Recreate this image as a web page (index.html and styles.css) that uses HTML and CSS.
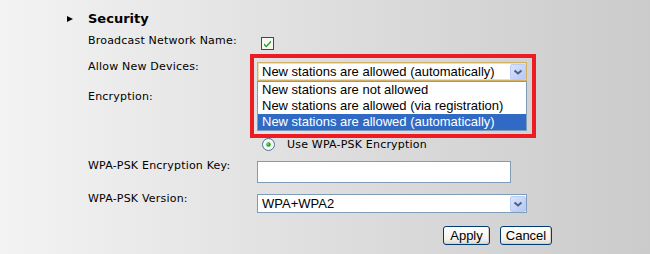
FILE: index.html
```html
<!DOCTYPE html>
<html>
<head>
    <meta charset="UTF-8">
    <title>Security</title>
    <link rel="stylesheet" href="styles.css">
</head>
<body>
    <div class="section">
        <h2 class="heading"><span class="bullet"></span>Security</h2>

        <div class="row">
            <div class="label">Broadcast Network Name:</div>
            <div class="control check-wrap">
                <svg class="checkbox" width="13" height="13" viewBox="0 0 13 13">
                    <rect x="0.5" y="0.5" width="12" height="12" fill="#f6f6f3" stroke="#1c5180"/>
                    <path d="M3 6.2 L5.2 8.4 L10 3.6 L10 5.6 L5.2 10.4 L3 8.2 Z" fill="#21a121"/>
                </svg>
            </div>
        </div>

        <div class="row">
            <div class="label">Allow New Devices:</div>
            <div class="control">
                <div class="select focused">
                    <span class="select-text">New stations are allowed (automatically)</span>
                    <svg class="arrow" width="16" height="16" viewBox="0 0 16 16">
                        <defs>
                            <linearGradient id="ab" x1="0" y1="0" x2="1" y2="1">
                                <stop offset="0" stop-color="#dbe5fd"/>
                                <stop offset="1" stop-color="#b3c6f4"/>
                            </linearGradient>
                        </defs>
                        <rect x="0.5" y="0.5" width="15" height="15" rx="1.5" fill="url(#ab)" stroke="#bccdf5"/>
                        <path d="M4.5 6.5 L8 9.5 L11.5 6.5" fill="none" stroke="#4d6185" stroke-width="2"/>
                    </svg>
                    <ul class="options">
                        <li>New stations are not allowed</li>
                        <li>New stations are allowed (via registration)</li>
                        <li class="selected">New stations are allowed (automatically)</li>
                    </ul>
                    <div class="highlight"></div>
                </div>
            </div>
        </div>

        <div class="row">
            <div class="label">Encryption:</div>
            <!-- the other radio choices sit under the open list -->
            <div class="control radios">
                <label class="radio-line">
                    <svg class="radio" width="13" height="13" viewBox="0 0 13 13">
                        <circle cx="6.5" cy="6.5" r="6" fill="#f6f6f3" stroke="#49739e"/>
                        <circle cx="6.5" cy="6.5" r="2.2" fill="#21a121"/>
                        <circle cx="6" cy="6" r="0.9" fill="#8fe08f"/>
                    </svg>Use WPA-PSK Encryption
                </label>
            </div>
        </div>

        <div class="row">
            <div class="label">WPA-PSK Encryption Key:</div>
            <div class="control">
                <div class="input"></div>
            </div>
        </div>

        <div class="row">
            <div class="label">WPA-PSK Version:</div>
            <div class="control">
                <div class="select">
                    <span class="select-text">WPA+WPA2</span>
                    <svg class="arrow" width="16" height="16" viewBox="0 0 16 16">
                        <defs>
                            <linearGradient id="ab2" x1="0" y1="0" x2="1" y2="1">
                                <stop offset="0" stop-color="#dbe5fd"/>
                                <stop offset="1" stop-color="#b3c6f4"/>
                            </linearGradient>
                        </defs>
                        <rect x="0.5" y="0.5" width="15" height="15" rx="1.5" fill="url(#ab2)" stroke="#bccdf5"/>
                        <path d="M4.5 6.5 L8 9.5 L11.5 6.5" fill="none" stroke="#4d6185" stroke-width="2"/>
                    </svg>
                </div>
            </div>
        </div>

        <div class="buttons">
            <button class="btn btn-apply">Apply</button>
            <button class="btn btn-cancel">Cancel</button>
        </div>
    </div>
</body>
</html>
```

FILE: styles.css
```css
* {
    margin: 0;
    padding: 0;
    box-sizing: border-box;
}

body {
    width: 650px;
    height: 254px;
    overflow: hidden;
    font-family: "DejaVu Sans", Verdana, sans-serif;
    font-size: 11px;
    color: #000;
    background: linear-gradient(to right, #f3f3f3, #dedede 50%, #cbcbcb);
}

.section {
    padding: 11px 0 0 67px;
}

.heading {
    display: flex;
    align-items: center;
    height: 16px;
    font-size: 13px;
    line-height: 16px;
    font-weight: bold;
}

.bullet {
    width: 21px;
    height: 7px;
}

.bullet::before {
    content: "";
    display: block;
    width: 0;
    height: 0;
    border-left: 6px solid #000;
    border-top: 3.5px solid transparent;
    border-bottom: 3.5px solid transparent;
}

.row {
    display: flex;
    align-items: flex-start;
    margin-left: 21px;
}

.row:nth-of-type(1) { margin-top: 7px; }
.row:nth-of-type(2) { margin-top: 10px; }
.row:nth-of-type(3) { margin-top: 9px; }
.row:nth-of-type(4) { margin-top: 8px; }
.row:nth-of-type(5) { margin-top: 9px; }

.label {
    width: 169px;
    line-height: 14px;
    letter-spacing: 0.2px;
}

.control {
    margin-top: 2px;
}

.check-wrap {
    margin-top: 3px;
    padding-left: 4px;
}

.checkbox {
    display: block;
}

.select {
    position: relative;
    display: flex;
    align-items: center;
    width: 270px;
    height: 19px;
    background: #fff;
    border: 1px solid #7f9db9;
    font-family: "Liberation Sans", Arial, sans-serif;
    font-size: 13px;
}

.select.focused {
    border-color: #d4b067;
    box-shadow: inset 0 0 0 1px #f1dfaa;
}

.select-text {
    flex: 1;
    padding-left: 4px;
    line-height: 17px;
}

.arrow {
    display: block;
}

.options {
    position: absolute;
    top: 18px;
    left: -1px;
    width: 270px;
    list-style: none;
    background: #fff;
    border: 1px solid #7f9db9;
    z-index: 2;
}

.options li {
    height: 16px;
    line-height: 16px;
    padding-left: 4px;
}

.options li.selected {
    background: #316ac5;
    color: #fff;
}

/* red annotation frame round the open list */
.highlight {
    position: absolute;
    top: -9px;
    left: -8px;
    width: 286px;
    height: 84px;
    border: 4px solid #ed1c24;
    pointer-events: none;
}

.radios {
    padding-top: 46px;
}

.radio-line {
    display: flex;
    align-items: center;
    height: 13px;
    padding-left: 5px;
    letter-spacing: 0.2px;
}

.radio {
    display: block;
    width: 13px;
    height: 13px;
    margin-right: 12px;
}

.input {
    width: 254px;
    height: 22px;
    background: #fff;
    border: 1px solid #7f9db9;
}

.buttons {
    display: flex;
    gap: 10px;
    margin: 13px 0 0 376px;
}

.btn {
    height: 19px;
    font-family: "Liberation Sans", Arial, sans-serif;
    font-size: 13px;
    color: #000;
    border: 1px solid #003c74;
    border-radius: 3px;
    background: linear-gradient(#ffffff, #f4f3ee 70%, #dcd8cc);
    box-shadow: inset -1px -1px 0 #d6d0c5;
}

.btn-apply {
    width: 47px;
}

.btn-cancel {
    width: 52px;
}
```
